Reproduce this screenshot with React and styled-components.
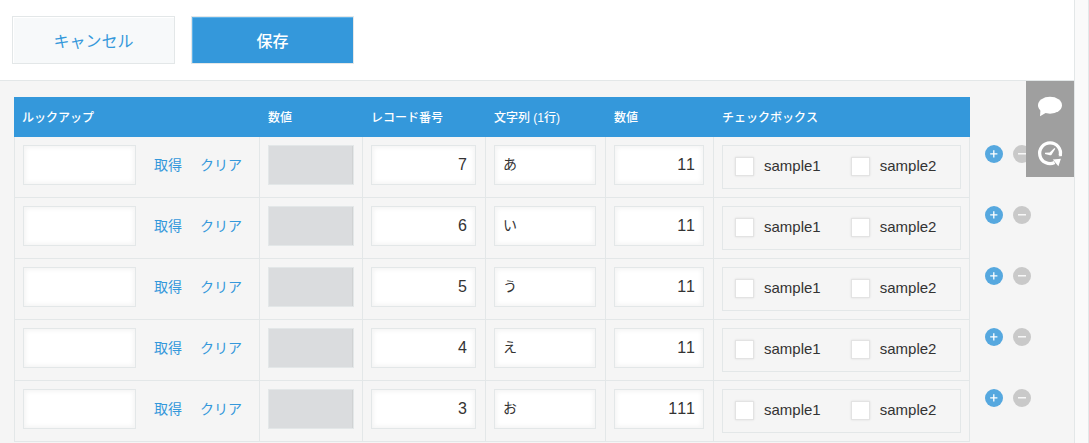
import React from 'react';
import styled, { createGlobalStyle } from 'styled-components';

const GlobalStyle = createGlobalStyle`
    * {
        box-sizing: border-box;
    }
    body {
        margin: 0;
        background-color: #fafafa;
        color: #333;
        font-family: "Liberation Sans", "Noto Sans CJK JP", sans-serif;
        font-size: 14px;
        font-kerning: none;
    }
    button, input {
        font-family: inherit;
        font-kerning: inherit;
        margin: 0;
    }
`
const Page = styled.div`
    display: flex;
    flex-direction: column;
    min-height: 100vh;
    margin-right: 14px;
    border-right: 1px solid #e3e7e8;
    background-color: #f5f5f5;
    box-shadow: 13px 0 0 #fafafa, 14px 0 0 #e3e7e8;
`
const Toolbar = styled.header`
    display: flex;
    gap: 16px;
    padding: 16px 12px;
    background-color: #fff;
    border-bottom: 1px solid #e3e7e8;
`
const ToolbarButton = styled.button`
    width: 163px;
    height: 48px;
    padding: 0;
    border: 1px solid #e3e7e8;
    background-color: ${props => props.$primary ? '#3498db' : '#f7f9fa'};
    box-shadow: ${props => props.$primary ? 'inset 1px 1px 0 #5fb3ea' : 'inset 1px 1px 0 #fff'};
    color: ${props => props.$primary ? '#fff' : '#3498db'};
    font-size: 16px;
    font-weight: ${props => props.$primary ? 500 : 400};
    cursor: pointer;
`
const Content = styled.main`
    position: relative;
    flex: 1;
    padding: 16px 14px 0;
`
const Table = styled.table`
    table-layout: fixed;
    width: 1021px;
    border-collapse: separate;
    border-spacing: 0;
`
const HeadCell = styled.th`
    width: ${props => props.$width}px;
    height: 40px;
    padding: 2px 8px 0;
    background-color: #3498db;
    color: #fff;
    font-size: 12px;
    font-weight: 500;
    line-height: 18px;
    text-align: left;
    white-space: nowrap;
`
const ActionHead = styled.td`
    width: 65px;
    padding: 0;
`
const Cell = styled.td`
    height: 61px;
    padding: 8px;
    border-right: 1px solid #e3e7e8;
    border-bottom: 1px solid #e3e7e8;
    vertical-align: top;

    &:first-child {
        border-left: 1px solid #e3e7e8;
    }
`
const ActionCell = styled.td`
    padding: 8px 0 8px 15px;
    vertical-align: top;
`
const TextBox = styled.input`
    display: block;
    width: ${props => props.$width}px;
    height: 40px;
    padding: ${props => props.$number ? '0 8px' : '0 8px 4px'};
    border: 1px solid #e3e7e8;
    border-radius: 0;
    background-color: #fff;
    box-shadow: inset 2px 2px 4px #f5f5f5, inset -2px -2px 4px #f5f5f5;
    color: #333;
    font-size: ${props => props.$number ? 16 : 14}px;
    text-align: ${props => props.$number ? 'right' : 'left'};

    &:disabled {
        background-color: #dadcde;
        box-shadow: inset -1px 0 0 #d0d2d3;
    }
`
const Lookup = styled.div`
    display: flex;
    align-items: center;
    gap: 18px;
`
const LookupLink = styled.a`
    color: #3498db;
    font-size: 14px;
    line-height: 20px;
    text-decoration: none;
    white-space: nowrap;
`
const CheckGroup = styled.div`
    display: flex;
    align-items: center;
    gap: 30px;
    height: 44px;
    padding: 0 12px 2px;
    border: 1px solid #e3e7e8;
`
const CheckLabel = styled.label`
    display: flex;
    align-items: center;
    gap: 10px;
    font-size: 15px;
    line-height: 20px;
`
const CheckBox = styled.input`
    appearance: none;
    width: 19px;
    height: 19px;
    border: 1px solid #e3e3e3;
    background-color: #fff;
    box-shadow: 0 0 2px #ddd;

    &:checked {
        background-color: #3498db;
    }
`
const Actions = styled.div`
    display: flex;
    gap: 10px;
`
const RoundButton = styled.button`
    display: flex;
    width: 18px;
    height: 18px;
    padding: 0;
    border: 0;
    border-radius: 50%;
    background-color: ${props => props.$muted ? '#c9c9c9' : '#56a8df'};
    cursor: pointer;
`
const SideMenu = styled.nav`
    position: absolute;
    top: 0;
    right: 0;
    display: flex;
    flex-direction: column;
    background-color: #9f9f9f;
`
const SideButton = styled.button`
    display: flex;
    width: 48px;
    height: 48px;
    padding: 0;
    border: 0;
    background: none;
    cursor: pointer;
`

const columns = [
    { label: 'ルックアップ', width: 246 },
    { label: '数値', width: 103 },
    { label: 'レコード番号', width: 123 },
    { label: '文字列 (1行)', width: 120 },
    { label: '数値', width: 108 },
    { label: 'チェックボックス', width: 256 },
]

const rows = [
    { id: '7', text: 'あ', value: '11' },
    { id: '6', text: 'い', value: '11' },
    { id: '5', text: 'う', value: '11' },
    { id: '4', text: 'え', value: '11' },
    { id: '3', text: 'お', value: '111' },
]

const PlusIcon = () => (
    <svg width="18" height="18" viewBox="0 0 18 18" stroke="#fff" strokeWidth="1.3">
        <path d="M5.2 8.800h7.200M8.800 5.200v7.200" />
    </svg>
)

const MinusIcon = () => (
    <svg width="18" height="18" viewBox="0 0 18 18" stroke="#fff" strokeWidth="1.300">
        <path d="M5 8.800h8" />
    </svg>
)

const CommentIcon = () => (
    <svg width="48" height="48" viewBox="0 0 48 48" fill="#fff">
        <ellipse cx="24" cy="24.300" rx="12" ry="8.500" />
        <path d="M14.500 28.500L14 35.200l6.500-3.700z" />
    </svg>
)

const HistoryIcon = () => (
    <svg width="48" height="48" viewBox="0 0 48 48">
        <path d="M34.200 26.600A10.400 10.400 0 1 0 28.600 33.600" fill="none" stroke="#fff" strokeWidth="3.300" />
        <path d="M26.800 30.600l8.100-.9-2.500 7.500z" fill="#fff" />
        <path d="M34.200 25.400h1.700l-.4 1.900h-3z" fill="#fff" />
        <path d="M19 23.700l4.700-.3 4.700-4.400.9.800-3.300 5.200c-.4 1-1.100 1.500-2.100 1.200L19 25z" fill="#fff" />
    </svg>
)

const Row = ({ row }) => (
    <tr>
        <Cell>
            <Lookup>
                <TextBox $width={113} aria-label="ルックアップ" />
                <LookupLink href="#get">取得</LookupLink>
                <LookupLink href="#clear">クリア</LookupLink>
            </Lookup>
        </Cell>
        <Cell><TextBox $width={86} disabled aria-label="数値" /></Cell>
        <Cell><TextBox $width={105} $number defaultValue={row.id} aria-label="レコード番号" /></Cell>
        <Cell><TextBox $width={102} defaultValue={row.text} aria-label="文字列 (1行)" /></Cell>
        <Cell><TextBox $width={90} $number defaultValue={row.value} aria-label="数値" /></Cell>
        <Cell>
            <CheckGroup>
                {['sample1', 'sample2'].map(name => (
                    <CheckLabel key={name}>
                        <CheckBox type="checkbox" />
                        {name}
                    </CheckLabel>
                ))}
            </CheckGroup>
        </Cell>
        <ActionCell>
            <Actions>
                <RoundButton type="button" aria-label="行を追加"><PlusIcon /></RoundButton>
                <RoundButton type="button" $muted aria-label="行を削除"><MinusIcon /></RoundButton>
            </Actions>
        </ActionCell>
    </tr>
)

const App = () => {
    return (
        <>
            <GlobalStyle />
            <Page>
                <Toolbar>
                    <ToolbarButton type="button">キャンセル</ToolbarButton>
                    <ToolbarButton type="button" $primary>保存</ToolbarButton>
                </Toolbar>
                <Content>
                    <Table>
                        <thead>
                            <tr>
                                {columns.map((column, i) => (
                                    <HeadCell key={i} $width={column.width}>{column.label}</HeadCell>
                                ))}
                                <ActionHead />
                            </tr>
                        </thead>
                        <tbody>
                            {rows.map(row => <Row key={row.id} row={row} />)}
                        </tbody>
                    </Table>
                    <SideMenu>
                        <SideButton type="button" aria-label="コメント"><CommentIcon /></SideButton>
                        <SideButton type="button" aria-label="変更履歴"><HistoryIcon /></SideButton>
                    </SideMenu>
                </Content>
            </Page>
        </>
    )
}

export default App;
